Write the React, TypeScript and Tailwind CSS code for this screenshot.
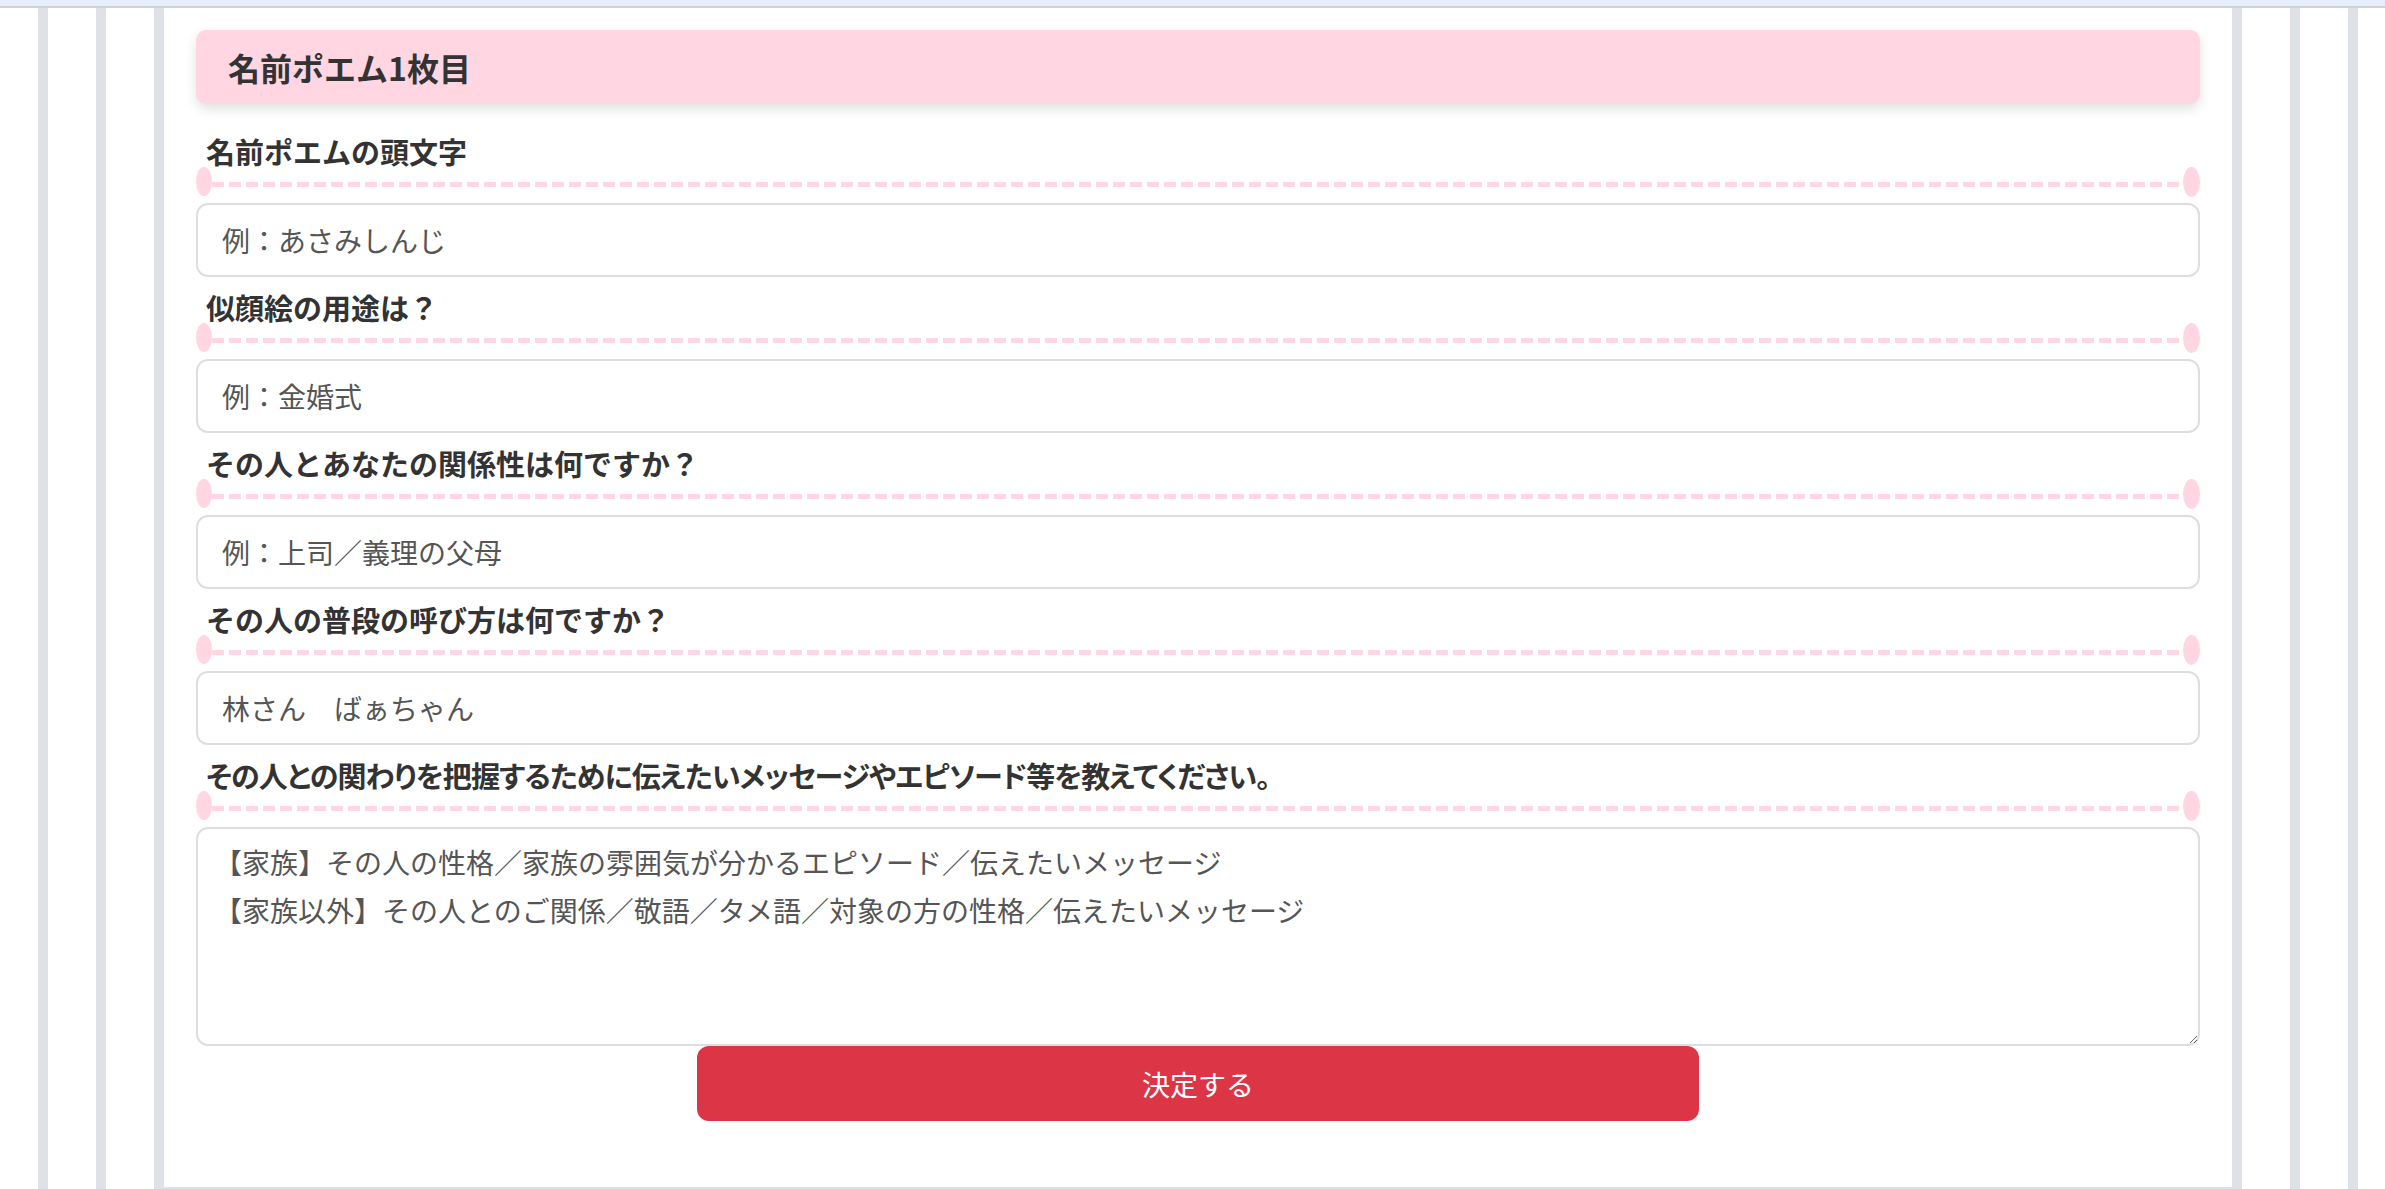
import React from "react";

const sections: { label: string; placeholder?: string; value?: string }[] = [
  { label: "名前ポエムの頭文字", placeholder: "例：あさみしんじ" },
  { label: "似顔絵の用途は？", placeholder: "例：金婚式" },
  { label: "その人とあなたの関係性は何ですか？", placeholder: "例：上司／義理の父母" },
  { label: "その人の普段の呼び方は何ですか？", value: "林さん　ばぁちゃん" },
];

function Label({ text, narrow }: { text: string; narrow?: boolean }) {
  return (
    <div>
      <div
        className={
          narrow
            ? "pl-[10px] text-[29px] font-bold leading-[32px] tracking-[-0.9px] text-[#333] [font-feature-settings:'palt']"
            : "pl-[10px] text-[29px] font-bold leading-[32px] text-[#333]"
        }
      >
        {text}
      </div>
      <div className="flex h-[30px] items-start">
        <div className="h-[29px] w-[16px] shrink-0 rounded-[50%] bg-[#ffd6e1]" />
        <div className="mt-[15px] h-[5px] flex-1 bg-[repeating-linear-gradient(90deg,#ffd6e1_0px,#ffd6e1_12px,transparent_12px,transparent_17px)]" />
        <div className="h-[30px] w-[17px] shrink-0 rounded-[50%] bg-[#ffd6e1]" />
      </div>
    </div>
  );
}

export default function App() {
  return (
    <div className="min-h-[1189px] bg-white font-['Noto_Sans_CJK_JP','Noto_Sans',sans-serif]">
      <div className="h-[8px] border-b-2 border-[#cfd3d8] bg-[#e7eefb]" />
      <div className="ml-[38px] w-[2320px] border-x-[10px] border-[#dee2e6] px-[48px]">
        <div className="border-x-[10px] border-[#dee2e6] px-[48px]">
          <div className="h-[1181px] border-x-[10px] border-b-2 border-[#dee2e6] bg-white px-[32px] pt-[22px]">
            <div className="flex h-[74px] items-center rounded-[10px] bg-[#ffd6e1] px-[32px] text-[32px] font-bold text-[#333] shadow-[0_5px_12px_rgba(0,0,0,0.12)]">
              名前ポエム1枚目
            </div>
            <div className="mt-[17px]">
              {sections.map((s, i) => (
                <div key={i} className="pt-[14px]">
                  <Label text={s.label} />
                  <input
                    className="mt-[6px] block h-[74px] w-full rounded-[12px] border-2 border-[#dedede] bg-white px-[24px] text-[28px] font-normal text-[#555] outline-none placeholder:text-[#555]"
                    placeholder={s.placeholder}
                    defaultValue={s.value}
                  />
                </div>
              ))}
              <div className="pt-[14px]">
                <Label narrow text="その人との関わりを把握するために伝えたいメッセージやエピソード等を教えてください。" />
                <textarea
                  className="mt-[6px] block h-[219px] w-full rounded-[12px] border-2 border-[#dedede] bg-white px-[16px] py-[9px] text-[28px] font-normal leading-[48px] text-[#555] outline-none placeholder:text-[#555]"
                  placeholder={"【家族】その人の性格／家族の雰囲気が分かるエピソード／伝えたいメッセージ\n【家族以外】その人とのご関係／敬語／タメ語／対象の方の性格／伝えたいメッセージ"}
                />
              </div>
              <div className="flex justify-center">
                <button className="h-[75px] w-[1002px] rounded-[12px] bg-[#dc3545] text-[28px] font-normal text-white">
                  決定する
                </button>
              </div>
            </div>
          </div>
        </div>
      </div>
    </div>
  );
}
